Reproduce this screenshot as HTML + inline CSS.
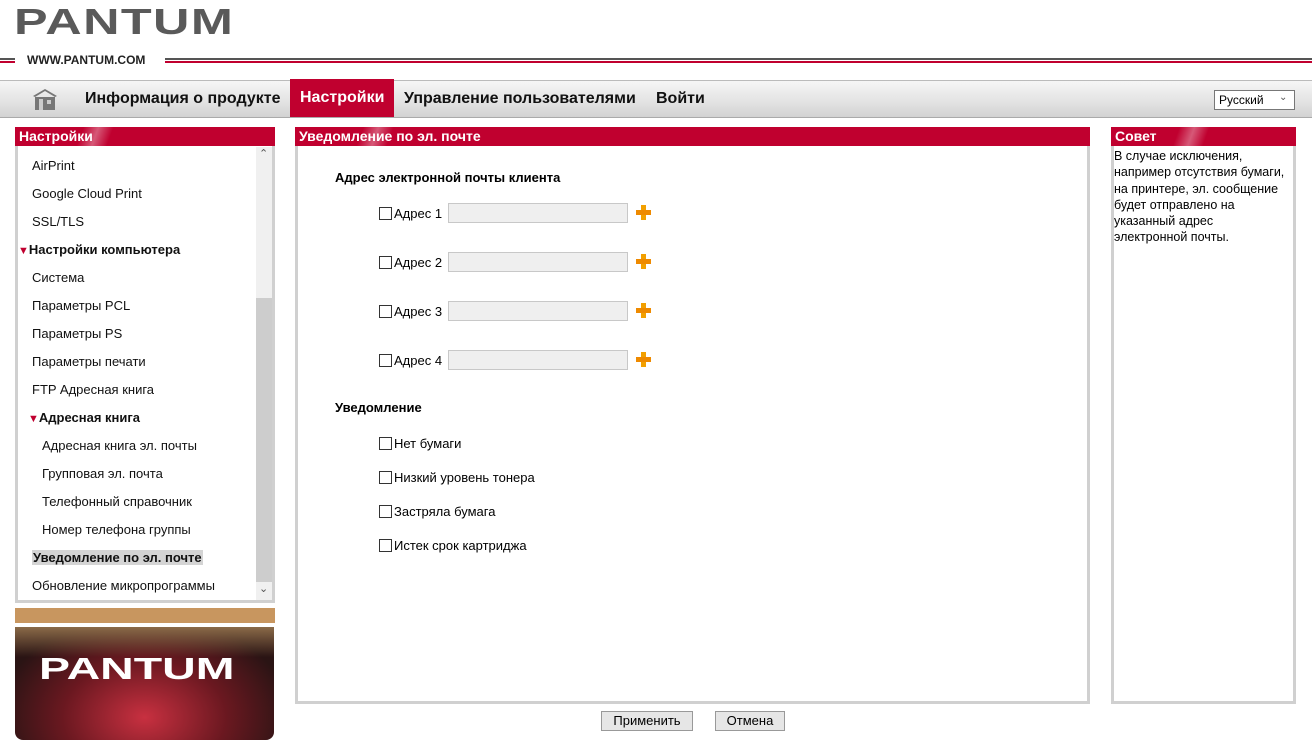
<!DOCTYPE html>
<html><head><meta charset="utf-8"><style>
*{margin:0;padding:0;box-sizing:border-box}
body{width:1312px;height:751px;background:#fff;font-family:"Liberation Sans",Arial,sans-serif;position:relative;overflow:hidden;font-size:13px;color:#000}
.abs{position:absolute}
.logo{left:14px;top:1px;font-size:36px;font-weight:bold;color:#5a5a5a;letter-spacing:1px;font-family:"Liberation Sans",sans-serif;transform:scaleX(1.4);transform-origin:left top}
.www{left:27px;top:53px;font-size:12px;font-weight:bold;color:#222}
.line1{left:0;top:58px;width:15px;height:2px;background:#555}
.line1b{left:0;top:61px;width:15px;height:2px;background:#c0002f}
.line2{left:165px;top:58px;width:1147px;height:2px;background:#555}
.line2b{left:165px;top:61px;width:1147px;height:2px;background:#c0002f}
.nav{left:0;top:80px;width:1312px;height:38px;background:linear-gradient(#f6f6f6,#e2e2e2 60%,#d2d2d2);border-top:1px solid #bbb;border-bottom:1px solid #aaa}
.nav span{position:absolute;top:9px;font-size:16px;font-weight:bold;color:#111}
.act{left:290px;top:79px;width:104px;height:38px;background:#c0002f}
.hdr{height:19px;background:#c0002f;color:#fff;font-weight:bold;font-size:14px;padding:1px 4px;overflow:hidden;position:relative}
.hdr i{position:absolute;left:60px;top:-4px;width:40px;height:28px;background:linear-gradient(110deg,rgba(255,255,255,0) 20%,rgba(255,255,255,.35) 50%,rgba(255,255,255,0) 80%)}
.box{border:3px solid #d0d0d0;border-top:none}
.mi{position:absolute;left:32px;font-size:13px;color:#111}
.b{font-weight:bold}
.tri{color:#c0002f;font-size:11px}
.cb{display:inline-block;width:13px;height:13px;border:1px solid #333;vertical-align:-2px;margin-right:2px;background:#fff}
.inp{position:absolute;left:448px;width:180px;height:20px;background:#efefef;border:1px solid #c8c8c8}
.plus{position:absolute;left:636px;width:16px;height:16px}
.plus:before{content:"";position:absolute;left:5px;top:0;width:5px;height:15px;background:#f2a000}
.plus:after{content:"";position:absolute;left:0;top:5px;width:15px;height:5px;background:#ee8a00}
.row{position:absolute;left:379px}
.btn{position:absolute;top:711px;height:20px;background:#e6e6e6;border:1px solid #999;font-size:13px;text-align:center;line-height:18px}
</style></head><body>
<div class="abs logo">PANTUM</div>
<div class="abs line1"></div><div class="abs line1b"></div>
<div class="abs www">WWW.PANTUM.COM</div>
<div class="abs line2"></div><div class="abs line2b"></div>
<div class="abs nav">
<svg style="position:absolute;left:33px;top:7px" width="24" height="22" viewBox="0 0 24 22"><path d="M0 8 L12 1 L24 8 L22 9 L12 3 L2 9Z" fill="#777"/><rect x="2" y="9" width="20" height="13" fill="#777"/><rect x="6" y="11" width="4" height="11" fill="#ccc"/><rect x="14" y="12" width="4" height="4" fill="#ccc"/></svg>
<span style="left:85px">Информация о продукте</span>
<span style="left:404px">Управление пользователями</span>
<span style="left:656px">Войти</span>
<div style="position:absolute;left:1214px;top:9px;width:81px;height:20px;background:#fff;border:1px solid #777;font-size:12px;padding:2px 4px">Русский<span style="position:absolute;left:64px;top:1px;font-size:10px;font-weight:normal;color:#555">&#8964;</span></div>
</div>
<div class="abs act"><span style="position:absolute;left:10px;top:10px;color:#fff;font-weight:bold;font-size:16px">Настройки</span></div>

<div class="abs" style="left:15px;top:127px;width:260px"><div class="hdr"><i></i>Настройки</div></div>
<div class="abs box" style="left:15px;top:146px;width:260px;height:457px"></div>
<div class="abs" style="left:256px;top:147px;width:16px;height:453px;background:#f0f0f0"></div>
<div class="abs" style="left:256px;top:298px;width:16px;height:284px;background:#cdcdcd"></div>
<div class="abs" style="left:259px;top:147px;font-size:11px;color:#555">&#8963;</div>
<div class="abs" style="left:259px;top:582px;font-size:11px;color:#555">&#8964;</div>
<div class="mi" style="top:158px">AirPrint</div>
<div class="mi" style="top:186px">Google Cloud Print</div>
<div class="mi" style="top:214px">SSL/TLS</div>
<div class="mi b" style="top:242px;left:18px"><span class="tri">▼</span>Настройки компьютера</div>
<div class="mi" style="top:270px">Система</div>
<div class="mi" style="top:298px">Параметры PCL</div>
<div class="mi" style="top:326px">Параметры PS</div>
<div class="mi" style="top:354px">Параметры печати</div>
<div class="mi" style="top:382px">FTP Адресная книга</div>
<div class="mi b" style="top:410px;left:28px"><span class="tri">▼</span>Адресная книга</div>
<div class="mi" style="top:438px;left:42px">Адресная книга эл. почты</div>
<div class="mi" style="top:466px;left:42px">Групповая эл. почта</div>
<div class="mi" style="top:494px;left:42px">Телефонный справочник</div>
<div class="mi" style="top:522px;left:42px">Номер телефона группы</div>
<div class="mi b" style="top:550px;background:#d4d4d4;padding:0 1px">Уведомление по эл. почте</div>
<div class="mi" style="top:578px">Обновление микропрограммы</div>
<div class="abs" style="left:15px;top:608px;width:260px;height:15px;background:#c8965f"></div>
<div class="abs" style="left:15px;top:627px;width:259px;height:113px;border-radius:0 0 8px 8px;background:radial-gradient(ellipse at 50% 80%,#c83040 0%,#6a1820 45%,#2a1414 80%),#2a1414;overflow:hidden">
<div style="position:absolute;left:0;top:0;width:100%;height:30px;background:linear-gradient(#8a6a48,rgba(60,30,20,0))"></div>
<div style="position:absolute;left:24px;top:24px;font-size:31px;font-weight:bold;color:#fff;transform:scaleX(1.5);transform-origin:left top;letter-spacing:0px">PANTUM</div>
</div>

<div class="abs" style="left:295px;top:127px;width:795px"><div class="hdr"><i></i>Уведомление по эл. почте</div></div>
<div class="abs box" style="left:295px;top:146px;width:795px;height:558px"></div>
<div class="abs b" style="left:335px;top:170px">Адрес электронной почты клиента</div>
<div class="row" style="top:206px"><span class="cb"></span>Адрес 1</div><div class="inp" style="top:203px"></div><div class="plus" style="top:205px"></div>
<div class="row" style="top:255px"><span class="cb"></span>Адрес 2</div><div class="inp" style="top:252px"></div><div class="plus" style="top:254px"></div>
<div class="row" style="top:304px"><span class="cb"></span>Адрес 3</div><div class="inp" style="top:301px"></div><div class="plus" style="top:303px"></div>
<div class="row" style="top:353px"><span class="cb"></span>Адрес 4</div><div class="inp" style="top:350px"></div><div class="plus" style="top:352px"></div>
<div class="abs b" style="left:335px;top:400px">Уведомление</div>
<div class="row" style="top:436px"><span class="cb"></span>Нет бумаги</div>
<div class="row" style="top:470px"><span class="cb"></span>Низкий уровень тонера</div>
<div class="row" style="top:504px"><span class="cb"></span>Застряла бумага</div>
<div class="row" style="top:538px"><span class="cb"></span>Истек срок картриджа</div>

<div class="abs" style="left:1111px;top:127px;width:185px"><div class="hdr"><i></i>Совет</div></div>
<div class="abs box" style="left:1111px;top:146px;width:185px;height:558px"></div>
<div class="abs" style="left:1114px;top:148px;width:172px;font-size:12.5px;line-height:16.3px">В случае исключения, например отсутствия бумаги, на принтере, эл. сообщение будет отправлено на указанный адрес электронной почты.</div>

<div class="btn" style="left:601px;width:92px">Применить</div>
<div class="btn" style="left:715px;width:70px">Отмена</div>
</body></html>
